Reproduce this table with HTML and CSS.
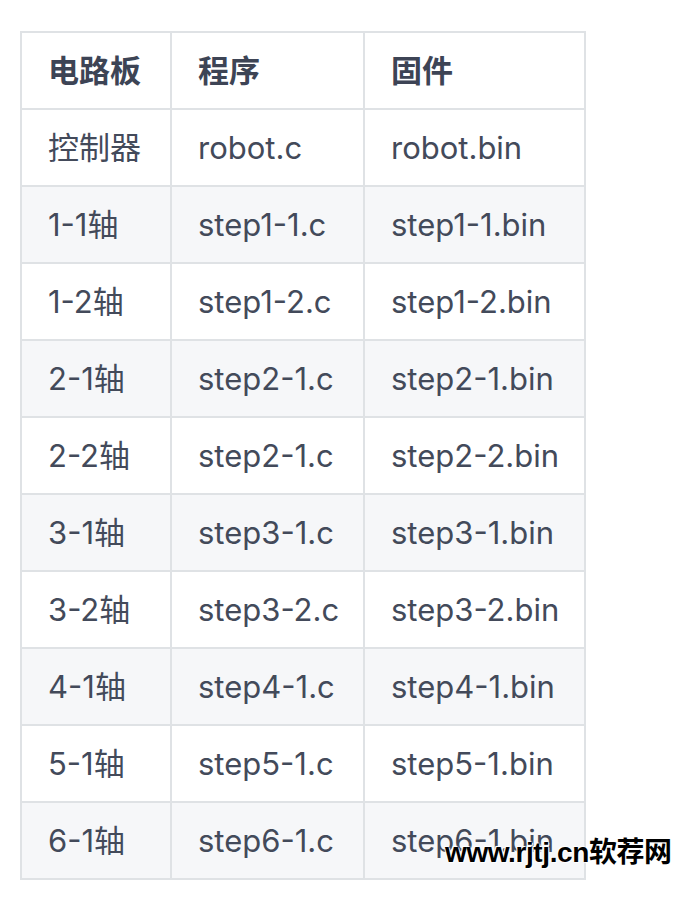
FILE: index.html
```html
<!DOCTYPE html>
<html>
<head>
<meta charset="utf-8">
<link rel="stylesheet" href="styles.css">
</head>
<body>
<table class="tbl">
<thead>
<tr><th class="c1">电路板</th><th class="c2">程序</th><th class="c3">固件</th></tr>
</thead>
<tbody>
<tr><td>控制器</td><td>robot.c</td><td>robot.bin</td></tr>
<tr><td>1-1轴</td><td>step1-1.c</td><td>step1-1.bin</td></tr>
<tr><td>1-2轴</td><td>step1-2.c</td><td>step1-2.bin</td></tr>
<tr><td>2-1轴</td><td>step2-1.c</td><td>step2-1.bin</td></tr>
<tr><td>2-2轴</td><td>step2-1.c</td><td>step2-2.bin</td></tr>
<tr><td>3-1轴</td><td>step3-1.c</td><td>step3-1.bin</td></tr>
<tr><td>3-2轴</td><td>step3-2.c</td><td>step3-2.bin</td></tr>
<tr><td>4-1轴</td><td>step4-1.c</td><td>step4-1.bin</td></tr>
<tr><td>5-1轴</td><td>step5-1.c</td><td>step5-1.bin</td></tr>
<tr><td>6-1轴</td><td>step6-1.c</td><td>step6-1.bin</td></tr>
</tbody>
</table>
<div class="watermark">www.rjtj.cn软荐网</div>
</body>
</html>
```

FILE: styles.css
```css
html, body {
  margin: 0;
  padding: 0;
  background: #ffffff;
}
body {
  position: relative;
  width: 680px;
  height: 898px;
  overflow: hidden;
  font-family: "Inter", "Noto Sans CJK SC", sans-serif;
  color: #434a5a;
}
.tbl {
  border-collapse: collapse;
  margin: 31px 0 0 20px;
  font-size: 31px;
  table-layout: fixed;
}
.tbl th, .tbl td {
  border: 2px solid #dfe2e5;
  height: 77px;
  padding: 0 0 0 26px;
  text-align: left;
  vertical-align: middle;
  line-height: 38px;
  box-sizing: border-box;
}
.tbl th {
  font-weight: 600;
  color: #3d4455;
}
.c1 { width: 150px; }
.c2 { width: 193px; }
.c3 { width: 221px; }
.tbl tbody tr:nth-child(even) td {
  background: #f6f7f9;
}
.watermark {
  position: absolute;
  left: 445px;
  top: 830px;
  font-family: "Liberation Sans", "Noto Sans CJK SC", sans-serif;
  font-weight: 700;
  font-size: 28px;
  color: #000;
  text-shadow: 0 0 2px #fff, 0 0 2px #fff, 1px 1px 0 #fff, -1px -1px 0 #fff;
  letter-spacing: -0.4px;
}
```
